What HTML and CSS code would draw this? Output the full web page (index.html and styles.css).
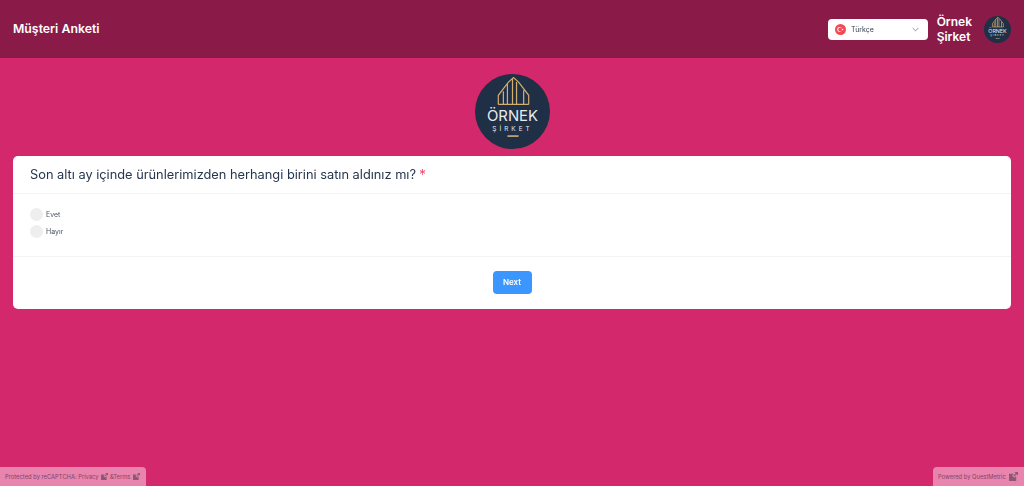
FILE: index.html
```html
<!DOCTYPE html>
<html lang="tr">
<head>
    <meta charset="UTF-8">
    <title>Müşteri Anketi</title>
    <link rel="stylesheet" href="styles.css">
</head>
<body>
    <header class="topbar">
        <div class="topbar-title">Müşteri Anketi</div>
        <div class="topbar-right">
            <div class="lang-select">
                <svg class="flag" viewBox="0 0 12 12">
                    <circle cx="6" cy="6" r="6" fill="#f04a57"/>
                    <circle cx="5" cy="6" r="2.6" fill="#fff"/>
                    <circle cx="5.7" cy="6" r="2.1" fill="#f04a57"/>
                    <circle cx="8.2" cy="6" r="0.9" fill="#fff"/>
                </svg>
                <span class="lang-name">Türkçe</span>
                <svg class="chevron" viewBox="0 0 10 6"><path d="M1 1l4 4 4-4" fill="none" stroke="#7b8494" stroke-width="1.3"/></svg>
            </div>
            <div class="company-name">Örnek<br>Şirket</div>
            <div class="logo logo-small">
                <svg viewBox="0 0 74 74">
                    <circle cx="37" cy="37" r="37" fill="#1f2f45"/>
                    <path d="M23 30V21L33 8 38 3.500 43 8 53 21V30M23 30H53M28 30V17M32 30V10M37 30V5M41 30V8M48 30V16" fill="none" stroke="#c9a66b" stroke-width="2"/>
                    <text x="37" y="46" class="logo-big" text-anchor="middle">ÖRNEK</text>
                    <text x="37" y="56" class="logo-sub" text-anchor="middle">ŞİRKET</text>
                    <rect x="32" y="60.500" width="11" height="1.500" fill="#d8b57c"/>
                </svg>
            </div>
        </div>
    </header>

    <main class="content">
        <div class="logo logo-main">
            <svg viewBox="0 0 74 74">
                <circle cx="37" cy="37" r="37" fill="#1f2f45"/>
                <path d="M23 30V21L33 8 38 3.500 43 8 53 21V30M23 30H53M28 30V17M32 30V10M37 30V5M41 30V8M48 30V16" fill="none" stroke="#d2ad72" stroke-width="1.200"/>
                <text x="37" y="46" class="logo-big" text-anchor="middle">ÖRNEK</text>
                <text x="37" y="56" class="logo-sub" text-anchor="middle">ŞİRKET</text>
                <rect x="32" y="60.500" width="11" height="1.500" fill="#d8b57c"/>
            </svg>
        </div>

        <section class="card">
            <div class="question">Son altı ay içinde ürünlerimizden herhangi birini satın aldınız mı?<span class="required">*</span></div>
            <div class="options">
                <label class="option"><span class="radio"></span>Evet</label>
                <label class="option"><span class="radio"></span>Hayır</label>
            </div>
            <div class="actions">
                <button class="next-button">Next</button>
            </div>
        </section>
    </main>

    <footer class="footer">
        <div class="badge badge-left">Protected by reCAPTCHA: Privacy
            <svg class="ext" viewBox="0 0 10 10"><path d="M0 2h5.500L3.500 4l2.500 2.500L8 4.500V10H0z M6 0h4v4L8.500 2.500 6 5 5 4l2.500-2.500z" fill="#8a5a73"/></svg>
            &amp;Terms
            <svg class="ext" viewBox="0 0 10 10"><path d="M0 2h5.500L3.500 4l2.500 2.500L8 4.500V10H0z M6 0h4v4L8.500 2.500 6 5 5 4l2.500-2.500z" fill="#8a5a73"/></svg>
        </div>
        <div class="badge badge-right">Powered by QuestMetric
            <svg class="ext ext-large" viewBox="0 0 10 10"><path d="M0 2h5.500L3.500 4l2.500 2.500L8 4.500V10H0z M6 0h4v4L8.500 2.500 6 5 5 4l2.500-2.500z" fill="#8a5a73"/></svg>
        </div>
    </footer>
</body>
</html>
```

FILE: styles.css
```css
* {
    box-sizing: border-box;
}
html, body {
    height: 100%;
}
body {
    margin: 0;
    font-family: 'Inter', sans-serif;
    background-color: #d3286b;
    display: flex;
    flex-direction: column;
    overflow: hidden;
}
.topbar {
    height: 58px;
    flex-shrink: 0;
    background-color: #8a1a47;
    display: flex;
    align-items: center;
    justify-content: space-between;
    padding: 0 13px;
}
.topbar-title {
    color: #fff;
    font-size: 12.3px;
    font-weight: 600;
    margin-top: -2px;
}
.topbar-right {
    display: flex;
    align-items: center;
}
.lang-select {
    width: 100px;
    height: 21px;
    background-color: #fff;
    border-radius: 4px;
    display: flex;
    align-items: center;
    padding: 0 7px;
    margin-right: 9px;
    will-change: transform;
}
.flag {
    width: 11px;
    height: 11px;
    margin-right: 5px;
}
.lang-name {
    flex: 1;
    font-size: 7px;
    color: #374151;
}
.chevron {
    width: 7px;
    height: 5px;
    margin-right: 2px;
}
.company-name {
    color: #fff;
    font-size: 12px;
    font-weight: 600;
    line-height: 15px;
    margin-right: 12px;
}
.logo svg {
    display: block;
    width: 100%;
    height: 100%;
}
.logo-small {
    width: 27px;
    height: 27px;
}
.logo-main {
    width: 75px;
    height: 75px;
    margin: 16px auto 7px;
}
.logo-big {
    font-family: 'Inter', sans-serif;
    font-size: 14.7px;
    fill: #e8ebef;
}
.logo-sub {
    font-family: 'Inter', sans-serif;
    font-size: 6.3px;
    letter-spacing: 3px;
    fill: #e8ebef;
}
.content {
    flex: 1;
    padding: 0 13px;
}
.card {
    background-color: #fff;
    border-radius: 5px;
    height: 152.5px;
    will-change: transform;
}
.question {
    height: 38px;
    padding: 0 17px;
    display: flex;
    align-items: center;
    font-size: 12.8px;
    color: #26354c;
    border-bottom: 1px solid #f3f4f6;
}
.required {
    color: #f0506e;
    font-size: 14px;
    margin-left: 3px;
}
.options {
    height: 63px;
    padding: 12px 17px 0;
    border-bottom: 1px solid #f3f4f6;
}
.option {
    height: 17px;
    display: flex;
    align-items: center;
    font-size: 7px;
    color: #4b5563;
}
.radio {
    width: 13px;
    height: 13px;
    border-radius: 50%;
    background-color: #eeeeee;
    margin-right: 3px;
}
.actions {
    height: 51px;
    display: flex;
    justify-content: center;
    align-items: center;
}
.next-button {
    width: 39px;
    height: 23.5px;
    background-color: #3b97ff;
    color: #fff;
    border: none;
    border-radius: 4px;
    font-family: inherit;
    font-size: 8px;
    font-weight: 600;
    padding: 0 0 1px;
}
.footer {
    display: flex;
    justify-content: space-between;
    align-items: flex-end;
}
.badge {
    height: 19px;
    background-color: #e884ad;
    color: #85456a;
    font-size: 5.8px;
    display: flex;
    align-items: center;
    gap: 1.2px;
    padding: 0 5px;
}
.badge-left {
    border-top-right-radius: 4px;
}
.badge-right {
    border-top-left-radius: 4px;
}
.ext {
    width: 7px;
    height: 7px;
    margin: 0 1px;
}
.ext-large {
    width: 9px;
    height: 9px;
    margin-left: 2px;
}
```
